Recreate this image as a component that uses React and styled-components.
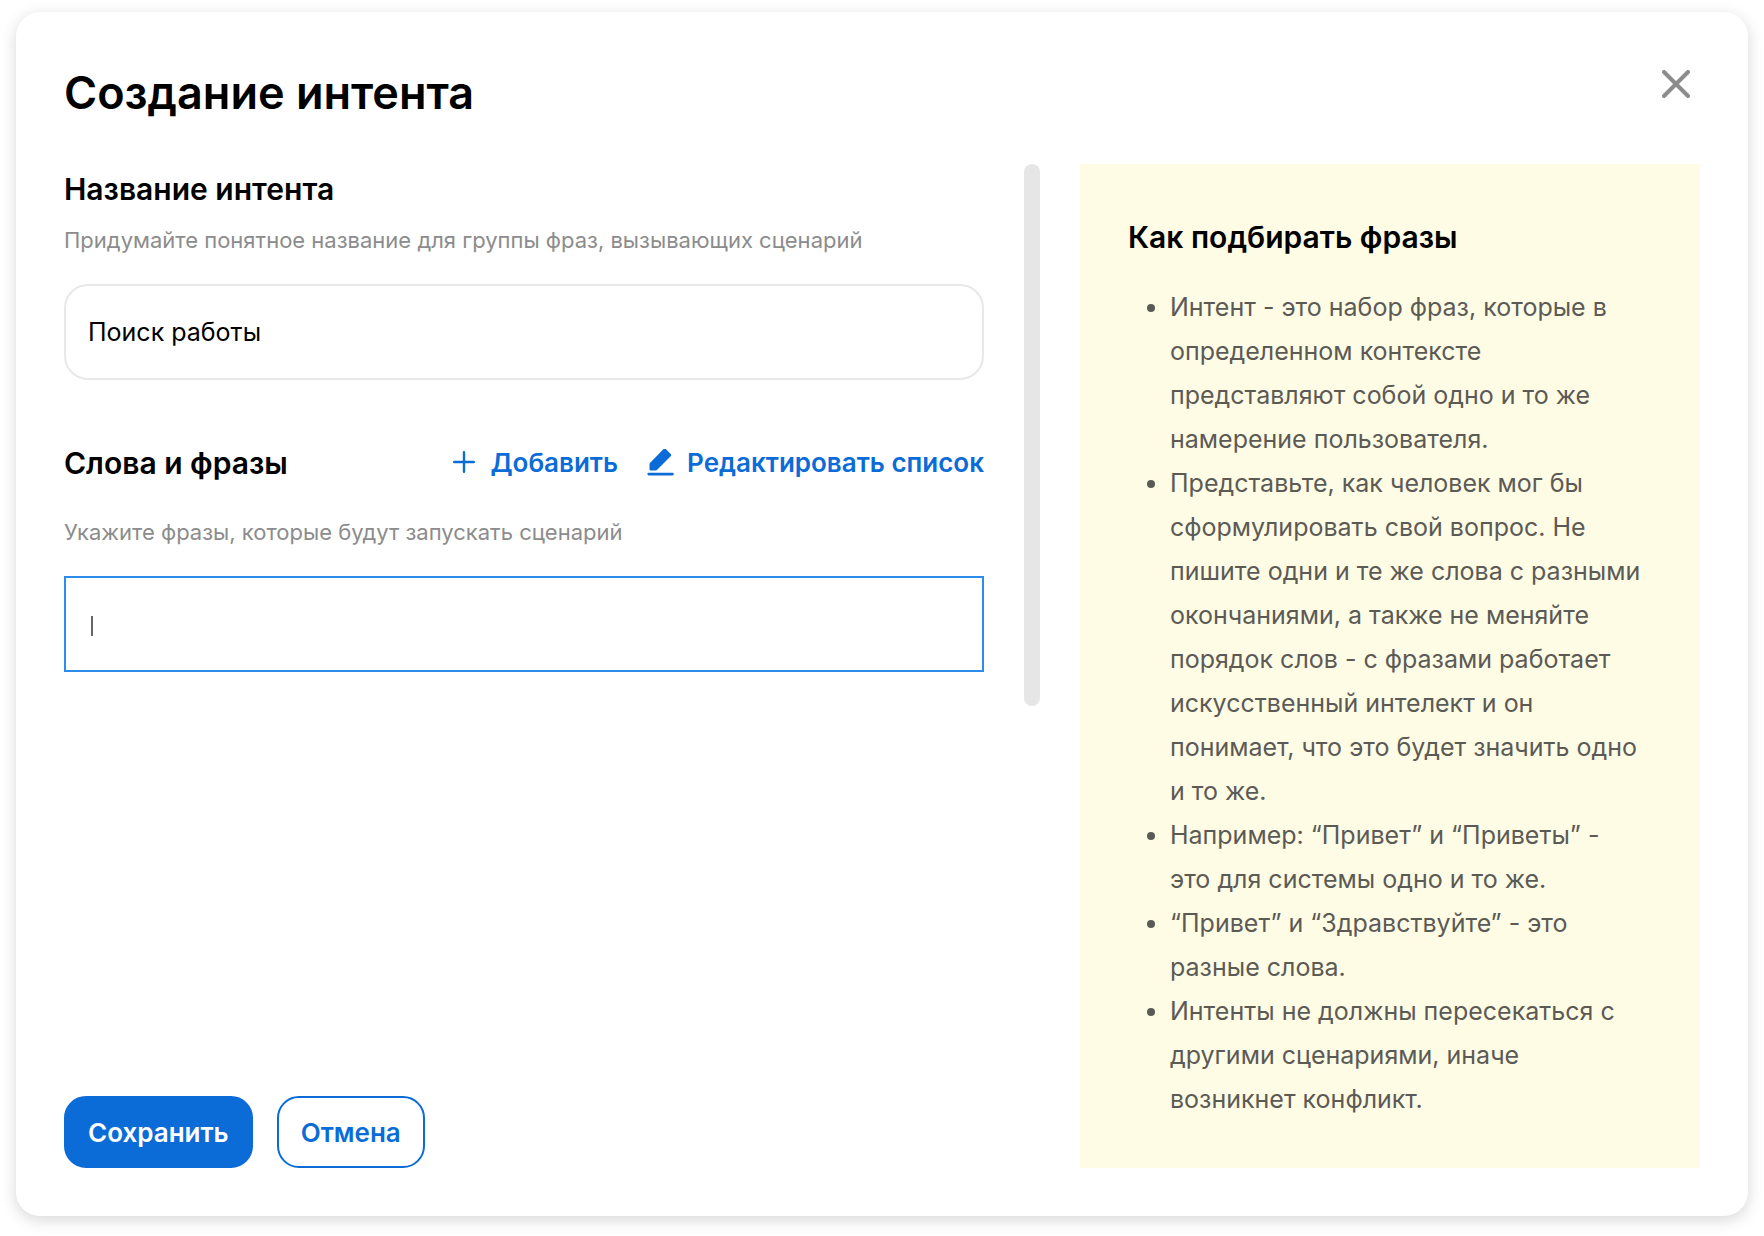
import React, { useState } from "react";
import styled, { createGlobalStyle } from "styled-components";

const GlobalStyle = createGlobalStyle`
  *, *::before, *::after {
    box-sizing: border-box;
  }

  body {
    margin: 0;
    background: #fff;
    color: #000;
    font-family: Inter, "Liberation Sans", sans-serif;
  }

  button, input {
    font-family: inherit;
  }
`;

const Page = styled.main`
  display: flex;
  min-height: 100vh;
  padding: 12px 16px 20px;
`;

const Modal = styled.section`
  flex: 1;
  display: flex;
  flex-direction: column;
  padding: 48px;
  background: #fff;
  border-radius: 24px;
  box-shadow: 0 4px 16px rgba(0, 0, 0, 0.16);
`;

const ModalHeader = styled.header`
  display: flex;
  align-items: flex-start;
  justify-content: space-between;
  margin-bottom: 38px;
`;

const Title = styled.h1`
  margin: 0;
  font-size: 45px;
  font-weight: 600;
  line-height: 66px;
`;

const CloseButton = styled.button`
  display: flex;
  align-items: center;
  justify-content: center;
  width: 48px;
  height: 48px;
  padding: 0;
  border: none;
  background: none;
  color: #8c8c8c;
  cursor: pointer;
`;

const ModalBody = styled.div`
  flex: 1;
  display: grid;
  grid-template-columns: 1fr 16px 620px;
  column-gap: 40px;
`;

const Form = styled.form`
  display: flex;
  flex-direction: column;
  min-width: 0;
`;

const Field = styled.div`
  & + & {
    margin-top: 58px;
  }
`;

const FieldHead = styled.div`
  display: flex;
  align-items: center;
  justify-content: space-between;
  margin-bottom: ${({ $spacious }) => ($spacious ? "28px" : "10px")};
`;

const Label = styled.label`
  font-size: 30px;
  font-weight: 600;
  line-height: 50px;
`;

const Hint = styled.p`
  margin: 0 0 28px;
  color: #8c8c8c;
  font-size: 22px;
  line-height: 32px;
`;

const InputWrap = styled.div`
  position: relative;
`;

const TextInput = styled.input`
  display: block;
  width: 100%;
  height: 96px;
  padding: 0 22px;
  border: 2px solid ${({ $active }) => ($active ? "#2b8ceb" : "#e8e8e8")};
  border-radius: ${({ $active }) => ($active ? "0" : "24px")};
  outline: none;
  background: #fff;
  color: #000;
  font-size: 25px;
  caret-color: transparent;
`;

const Caret = styled.span`
  position: absolute;
  top: 40px;
  left: 27px;
  width: 2px;
  height: 20px;
  background: #666;
  pointer-events: none;
`;

const Actions = styled.div`
  display: flex;
  gap: 28px;
`;

const LinkButton = styled.button`
  display: flex;
  align-items: center;
  gap: 13px;
  padding: 0;
  border: none;
  background: none;
  color: #0b6cd8;
  font-size: 26px;
  font-weight: 600;
  line-height: 50px;
  cursor: pointer;
`;

const Footer = styled.footer`
  display: flex;
  gap: 24px;
  margin-top: auto;
`;

const Button = styled.button`
  height: 72px;
  padding: 0 22px;
  border: 2px solid #0b6cd8;
  border-radius: 22px;
  background: ${({ $primary }) => ($primary ? "#0b6cd8" : "#fff")};
  color: ${({ $primary }) => ($primary ? "#fff" : "#0b6cd8")};
  font-size: 26px;
  font-weight: 600;
  cursor: pointer;
`;

const ScrollThumb = styled.div`
  height: 542px;
  border-radius: 8px;
  background: #e6e6e6;
`;

const Tips = styled.aside`
  padding: 48px 56px 40px 48px;
  background: #fefce5;
`;

const TipsTitle = styled.h2`
  margin: 0 0 23px;
  font-size: 30px;
  font-weight: 600;
  line-height: 50px;
`;

const TipsList = styled.ul`
  margin: 0;
  padding-left: 42px;
  color: #5c5a55;
  font-size: 25px;
  line-height: 44px;
`;

const CloseIcon = () => (
  <svg width="28" height="28" viewBox="0 0 28 28" fill="none" stroke="currentColor" strokeWidth="4" strokeLinecap="round" aria-hidden="true">
    <path d="M2 2l24 24M26 2L2 26" />
  </svg>
);

const PlusIcon = () => (
  <svg width="28" height="28" viewBox="0 0 28 28" fill="none" stroke="currentColor" strokeWidth="2.4" strokeLinecap="round" aria-hidden="true">
    <path d="M15 3.2v19.6M5.2 13h19.6" />
  </svg>
);

const EditIcon = () => (
  <svg width="28" height="28" viewBox="0 0 28 28" fill="currentColor" aria-hidden="true">
    <path d="M17.6 .1a1.6 1.6 0 0 1 2.2 0l4.9 4.9a1.6 1.6 0 0 1 0 2.2L11.2 20.7a2.4 2.4 0 0 1-1.7.7H4.6a1.1 1.1 0 0 1-1.1-1.1v-4.8c0-.6.3-1.2.7-1.7z" />
    <rect x="1.4" y="23.8" width="26.4" height="2.6" rx="1.3" />
  </svg>
);

const tips = [
  "Интент - это набор фраз, которые в определенном контексте представляют собой одно и то же намерение пользователя.",
  "Представьте, как человек мог бы сформулировать свой вопрос. Не пишите одни и те же слова с разными окончаниями, а также не меняйте порядок слов - с фразами работает искусственный интелект и он понимает, что это будет значить одно и то же.",
  "Например: “Привет” и “Приветы” - это для системы одно и то же.",
  "“Привет” и “Здравствуйте” - это разные слова.",
  "Интенты не должны пересекаться с другими сценариями, иначе возникнет конфликт.",
];

const App = () => {
  const [name, setName] = useState("Поиск работы");
  const [phrase, setPhrase] = useState("");

  return (
    <>
      <GlobalStyle />
      <Page>
        <Modal role="dialog" aria-labelledby="intent-title">
          <ModalHeader>
            <Title id="intent-title">Создание интента</Title>
            <CloseButton type="button" aria-label="Закрыть">
              <CloseIcon />
            </CloseButton>
          </ModalHeader>

          <ModalBody>
            <Form onSubmit={(e) => e.preventDefault()}>
              <Field>
                <FieldHead>
                  <Label htmlFor="intent-name">Название интента</Label>
                </FieldHead>
                <Hint>Придумайте понятное название для группы фраз, вызывающих сценарий</Hint>
                <TextInput
                  id="intent-name"
                  value={name}
                  onChange={(e) => setName(e.target.value)}
                />
              </Field>

              <Field>
                <FieldHead $spacious>
                  <Label htmlFor="intent-phrase">Слова и фразы</Label>
                  <Actions>
                    <LinkButton type="button">
                      <PlusIcon />
                      Добавить
                    </LinkButton>
                    <LinkButton type="button">
                      <EditIcon />
                      Редактировать список
                    </LinkButton>
                  </Actions>
                </FieldHead>
                <Hint>Укажите фразы, которые будут запускать сценарий</Hint>
                <InputWrap>
                  <TextInput
                    id="intent-phrase"
                    $active
                    value={phrase}
                    onChange={(e) => setPhrase(e.target.value)}
                  />
                  {!phrase && <Caret />}
                </InputWrap>
              </Field>

              <Footer>
                <Button type="submit" $primary>Сохранить</Button>
                <Button type="button">Отмена</Button>
              </Footer>
            </Form>

            <ScrollThumb />

            <Tips>
              <TipsTitle>Как подбирать фразы</TipsTitle>
              <TipsList>
                {tips.map((tip) => (
                  <li key={tip}>{tip}</li>
                ))}
              </TipsList>
            </Tips>
          </ModalBody>
        </Modal>
      </Page>
    </>
  );
};

export default App;
